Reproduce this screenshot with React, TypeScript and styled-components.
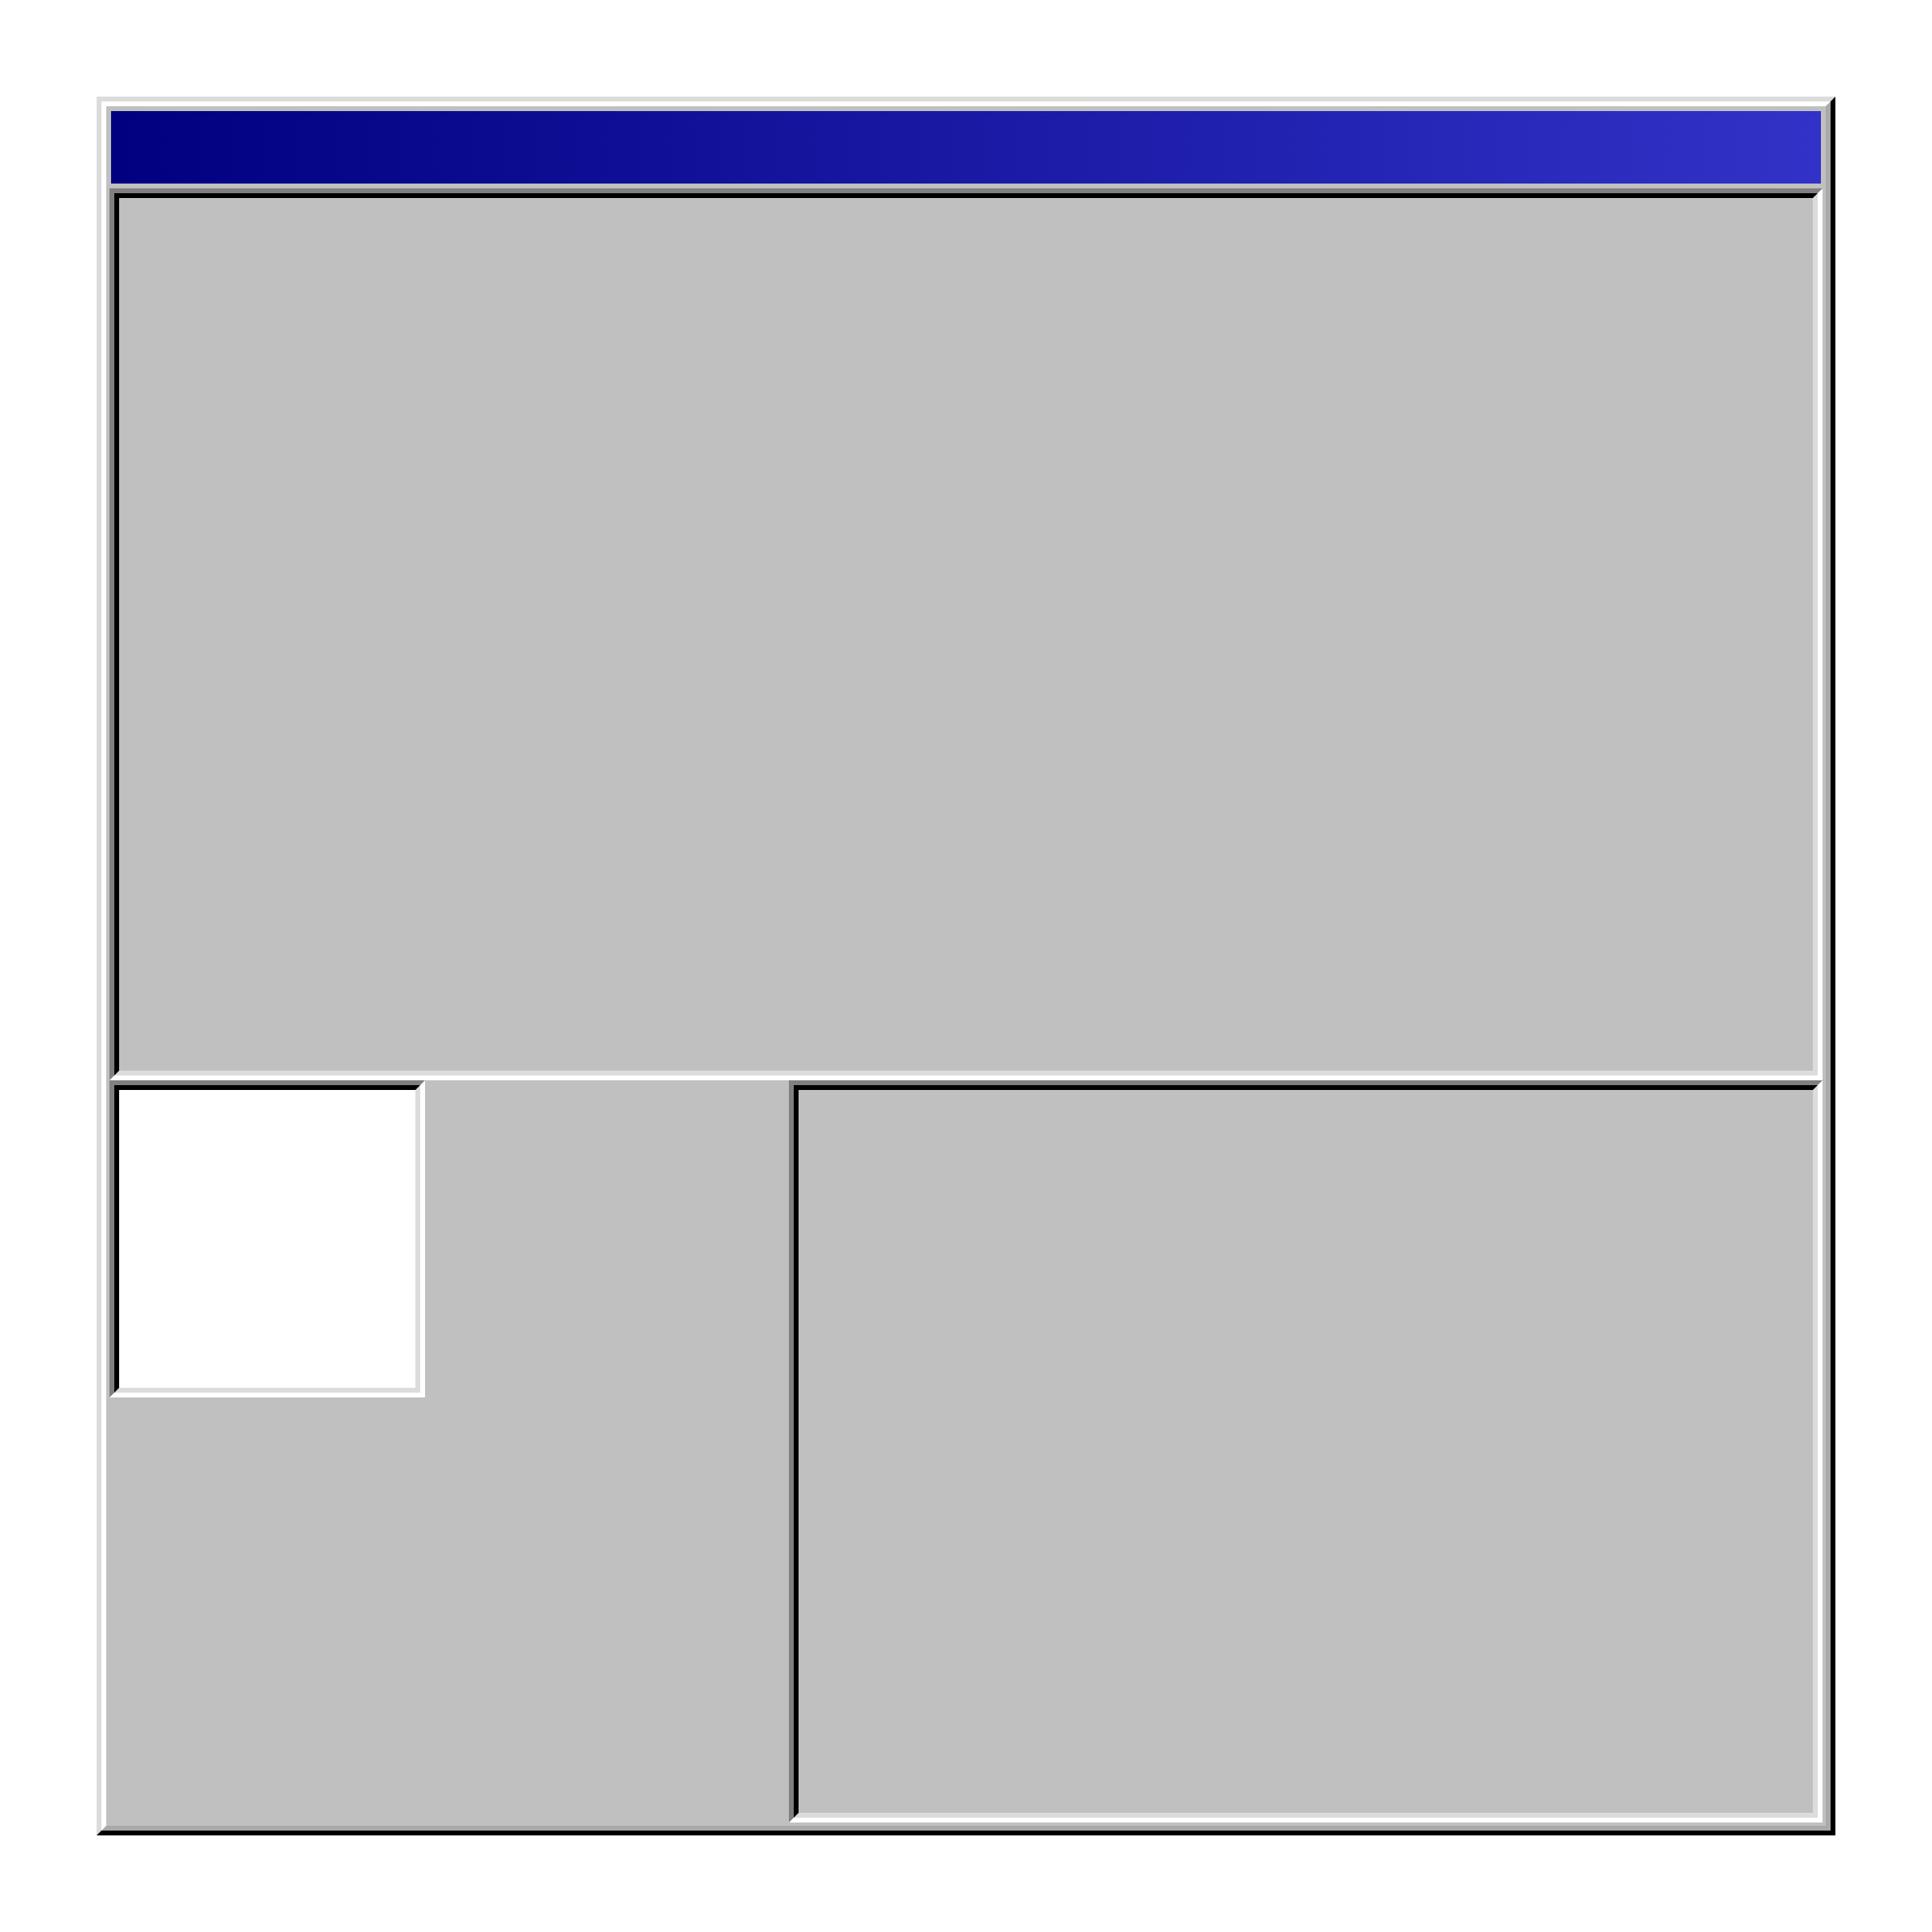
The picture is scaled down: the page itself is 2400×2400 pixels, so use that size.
import styled, { createGlobalStyle } from 'styled-components'

const GlobalStyle = createGlobalStyle`
  html, body {
    margin: 0;
    padding: 0;
    background: #ffffff;
    font-family: "Liberation Sans", Arial, sans-serif;
  }
  * {
    box-sizing: border-box;
  }
`

const App = (): JSX.Element => {
  return (
    <>
      <GlobalStyle />
      <Page>
        <Window>
          <Frame>
            <TitleBar />
            <Sunken>
              <SunkenInner $fill="#c0c0c0" />
            </Sunken>
            <BottomRow>
              <LeftColumn>
                <Sunken $width={392} $height={394}>
                  <SunkenInner $fill="#ffffff" />
                </Sunken>
              </LeftColumn>
              <Sunken>
                <SunkenInner $fill="#c0c0c0" />
              </Sunken>
            </BottomRow>
          </Frame>
        </Window>
      </Page>
    </>
  )
}

const Page = styled.div`
  padding: 120px 0 0 120px;
`

const Window = styled.div`
  width: 2160px;
  height: 2160px;
  border: 6px solid;
  border-color: #dcdcdc #000000 #000000 #dcdcdc;
  background: #c0c0c0;
`

const Frame = styled.div`
  height: 100%;
  border: 6px solid;
  border-color: #ffffff #a9a9a9 #a9a9a9 #ffffff;
  padding: 4px;
  display: flex;
  flex-direction: column;
  background: #c0c0c0;
`

const TitleBar = styled.div`
  height: 90px;
  margin: 2px 2px 6px;
  background: linear-gradient(to right, #000080, #3232c8);
`

const Sunken = styled.div<{ $width?: number; $height?: number }>`
  width: ${({ $width }) => ($width ? `${$width}px` : 'auto')};
  height: ${({ $height }) => ($height ? `${$height}px` : '1108px')};
  border: 6px solid;
  border-color: #808080 #ffffff #ffffff #808080;
  display: flex;
`

const SunkenInner = styled.div<{ $fill: string }>`
  flex: 1;
  border: 6px solid;
  border-color: #000000 #dcdcdc #dcdcdc #000000;
  background: ${({ $fill }) => $fill};
`

const BottomRow = styled.div`
  flex: 1;
  display: grid;
  grid-template-columns: 844px 1fr;

  & > ${Sunken} {
    height: auto;
  }
`

const LeftColumn = styled.div`
  display: flex;
  align-items: flex-start;
`

export default App
